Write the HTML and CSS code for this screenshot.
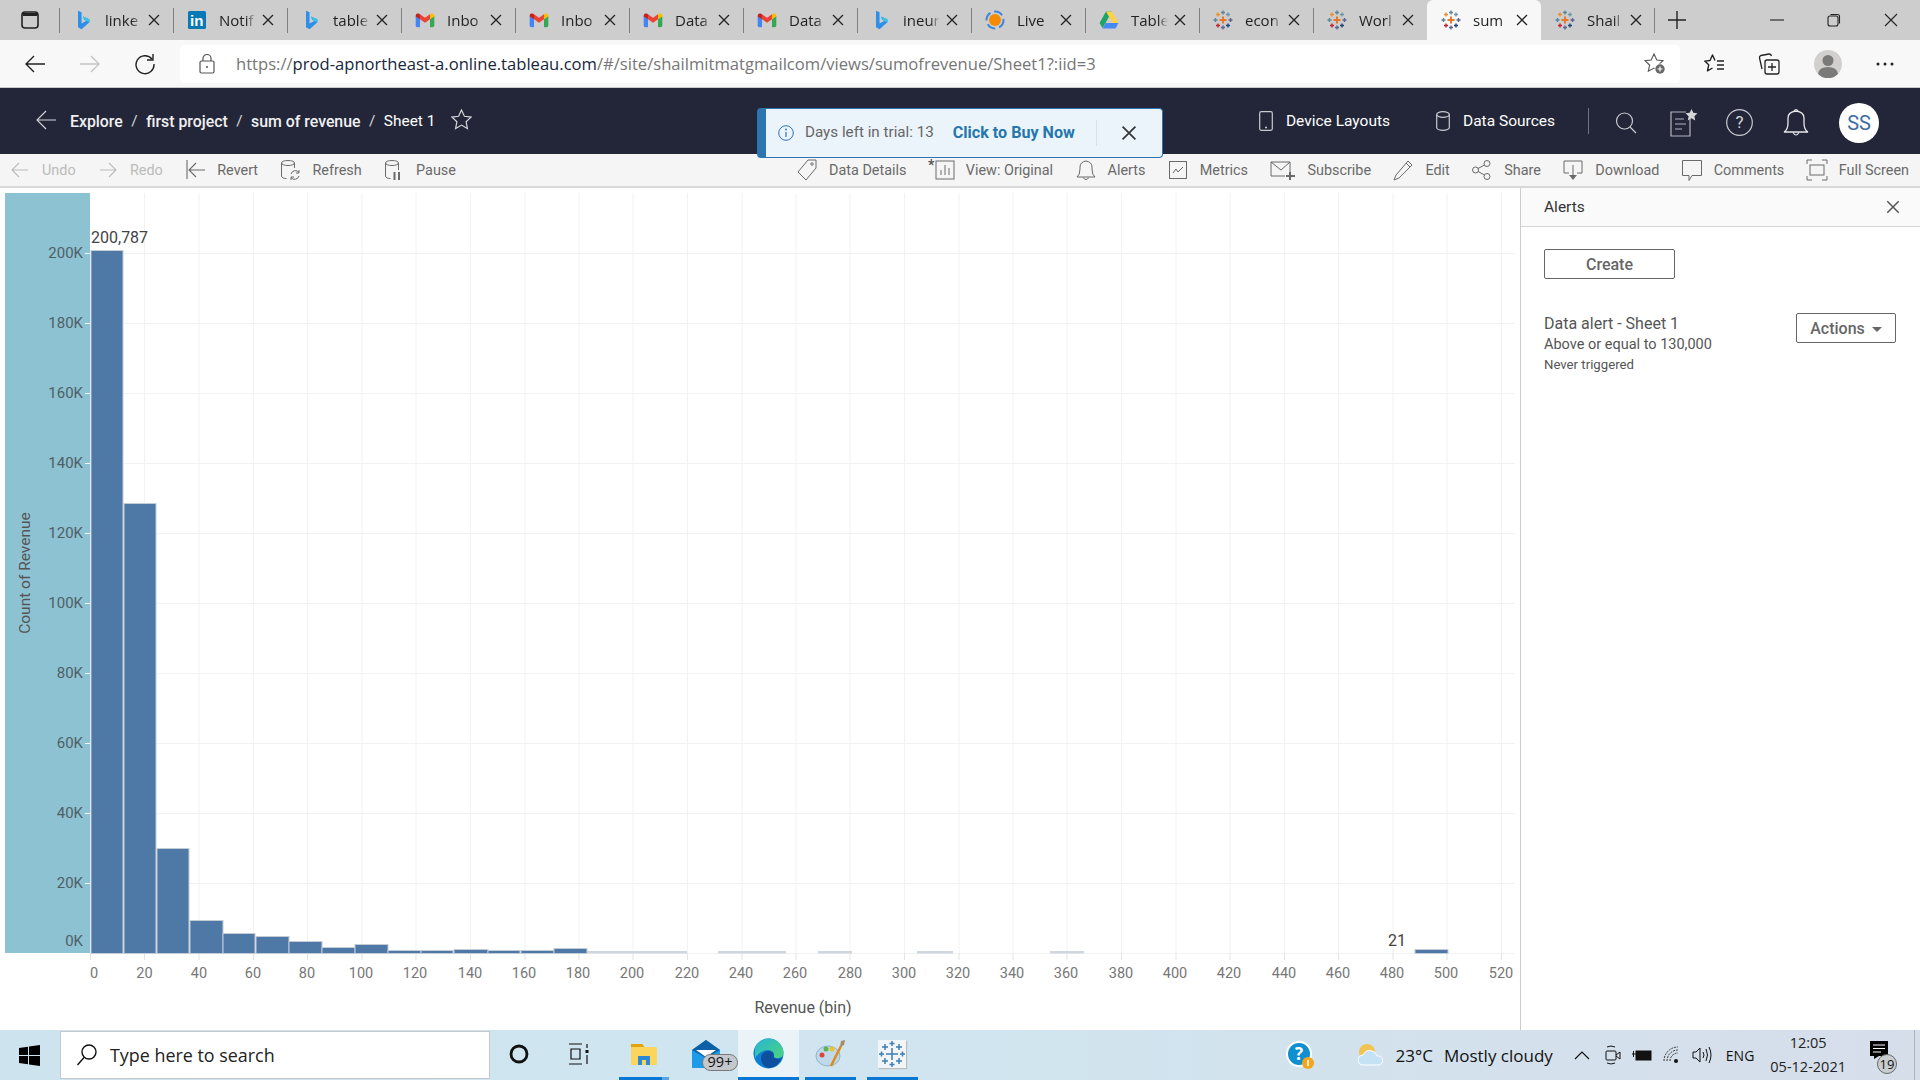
FILE: index.html
```html
<!DOCTYPE html>
<html lang="en">
<head>
<meta charset="utf-8">
<title>sum of revenue</title>
<link rel="stylesheet" href="styles.css">
</head>
<body>
<svg class="defs" width="0" height="0" aria-hidden="true">
  <symbol id="tableau" viewBox="0 0 20 20">
    <g fill="none" stroke-width="1.4">
      <path d="M10 6.500v7M6.500 10h7" stroke="#e8762b" stroke-width="2"/>
      <path d="M10 .5v4M8 2.500h4" stroke="#5b879b"/>
      <path d="M15 2.500v4M13 4.500h4" stroke="#7099a6"/>
      <path d="M5 2.500v4M3 4.500h4" stroke="#eb912b"/>
      <path d="M2.500 8v4M.5 10h4" stroke="#59879b"/>
      <path d="M17.500 8v4M15.500 10h4" stroke="#5b6591"/>
      <path d="M5 13.500v4M3 15.500h4" stroke="#c72035"/>
      <path d="M15 13.500v4M13 15.500h4" stroke="#1f457e"/>
      <path d="M10 15.500v4M8 17.500h4" stroke="#5c6692"/>
    </g>
  </symbol>
  <symbol id="bing" viewBox="0 0 20 28">
    <path d="M3 1l5 2v16l7-4-3.500-1.500L10 9l9 4v4L8 27l-5-3z" fill="#2f8fe8"/>
    <path d="M10 9l9 4v4l-6-2.500z" fill="#38c6e8"/>
  </symbol>
  <symbol id="gmail" viewBox="0 0 28 22">
    <path d="M1 5v14q0 2 2 2h4V10z" fill="#4285f4"/>
    <path d="M27 5v14q0 2-2 2h-4V10z" fill="#34a853"/>
    <path d="M7 10l7 5 7-5V3l-7 5-7-5z" fill="#ea4335"/>
    <path d="M1 5q0-4 4-3l2 1v7L1 6z" fill="#c5221f"/>
    <path d="M27 5q0-4-4-3l-2 1v7l6-4z" fill="#fbbc04"/>
  </symbol>
  <symbol id="x" viewBox="0 0 14 14"><path d="M2 2l10 10M12 2L2 12" fill="none" stroke="currentColor" stroke-width="1.3"/></symbol>
</svg>

<header class="tabstrip">
  <div class="winbtn">
    <svg width="20" height="20" viewBox="0 0 20 20"><rect x="2" y="2" width="16" height="16" rx="3" fill="none" stroke="#222" stroke-width="1.600"/><path d="M3 3h14v3H3z" fill="#222"/></svg>
  </div>
  <div class="tab"><svg class="favicon" viewBox="0 0 20 28"><use href="#bing"/></svg><span class="tab-title">linke</span><svg class="tab-x"><use href="#x"/></svg></div>
  <div class="tab"><svg class="favicon" viewBox="0 0 20 20"><rect x="1" y="1" width="18" height="18" rx="1.500" fill="#0a78b5"/><text x="3" y="16" class="in">in</text></svg><span class="tab-title">Notif</span><svg class="tab-x"><use href="#x"/></svg></div>
  <div class="tab"><svg class="favicon" viewBox="0 0 20 28"><use href="#bing"/></svg><span class="tab-title">table</span><svg class="tab-x"><use href="#x"/></svg></div>
  <div class="tab"><svg class="favicon" viewBox="0 0 28 22"><use href="#gmail"/></svg><span class="tab-title">Inbo</span><svg class="tab-x"><use href="#x"/></svg></div>
  <div class="tab"><svg class="favicon" viewBox="0 0 28 22"><use href="#gmail"/></svg><span class="tab-title">Inbo</span><svg class="tab-x"><use href="#x"/></svg></div>
  <div class="tab"><svg class="favicon" viewBox="0 0 28 22"><use href="#gmail"/></svg><span class="tab-title">Data</span><svg class="tab-x"><use href="#x"/></svg></div>
  <div class="tab"><svg class="favicon" viewBox="0 0 28 22"><use href="#gmail"/></svg><span class="tab-title">Data</span><svg class="tab-x"><use href="#x"/></svg></div>
  <div class="tab"><svg class="favicon" viewBox="0 0 20 28"><use href="#bing"/></svg><span class="tab-title">ineur</span><svg class="tab-x"><use href="#x"/></svg></div>
  <div class="tab"><svg class="favicon" viewBox="0 0 20 20"><circle cx="10" cy="10" r="8.500" fill="none" stroke="#3b87d8" stroke-width="2" stroke-dasharray="9 4"/><circle cx="10" cy="10" r="6" fill="#f58a07"/></svg><span class="tab-title">Live</span><svg class="tab-x"><use href="#x"/></svg></div>
  <div class="tab"><svg class="favicon" viewBox="0 0 20 20"><path d="M7 1.500h6L6.500 13 3.500 18 .5 13z" fill="#1fa463"/><path d="M13 1.500l6.500 11.500h-6L7 1.500z" fill="#ffd04b"/><path d="M6.500 13h13L16.500 18.500h-13z" fill="#4688f4"/></svg><span class="tab-title">Table</span><svg class="tab-x"><use href="#x"/></svg></div>
  <div class="tab"><svg class="favicon"><use href="#tableau"/></svg><span class="tab-title">econ</span><svg class="tab-x"><use href="#x"/></svg></div>
  <div class="tab"><svg class="favicon"><use href="#tableau"/></svg><span class="tab-title">Worl</span><svg class="tab-x"><use href="#x"/></svg></div>
  <div class="tab tab-active"><svg class="favicon"><use href="#tableau"/></svg><span class="tab-title">sum</span><svg class="tab-x"><use href="#x"/></svg></div>
  <div class="tab tab-last"><svg class="favicon"><use href="#tableau"/></svg><span class="tab-title">Shail</span><svg class="tab-x"><use href="#x"/></svg></div>
  <svg class="newtab" width="20" height="20" viewBox="0 0 20 20"><path d="M10 1v18M1 10h18" stroke="#222" stroke-width="1.400"/></svg>
  <div class="wincontrols">
    <svg width="14" height="14" viewBox="0 0 14 14"><path d="M0 7h14" stroke="#222" stroke-width="1.100"/></svg>
    <svg width="14" height="14" viewBox="0 0 14 14"><rect x="1" y="3" width="10" height="10" rx="2" fill="none" stroke="#222" stroke-width="1.100"/><path d="M3.500 1.500h7q2 0 2 2v7" fill="none" stroke="#222" stroke-width="1.100"/></svg>
    <svg width="14" height="14" viewBox="0 0 14 14"><path d="M1 1l12 12M13 1L1 13" stroke="#222" stroke-width="1.100"/></svg>
  </div>
</header>

<div class="addressbar">
  <svg class="nav-ic" width="22" height="22" viewBox="0 0 22 22"><path d="M21 11H2M10 3l-8 8 8 8" fill="none" stroke="#222" stroke-width="1.400"/></svg>
  <svg class="nav-ic" width="22" height="22" viewBox="0 0 22 22"><path d="M1 11h19M12 3l8 8-8 8" fill="none" stroke="#c4c4c4" stroke-width="1.400"/></svg>
  <svg class="nav-ic" width="22" height="22" viewBox="0 0 22 22"><path d="M18 6a9 9 0 1 0 2 5" fill="none" stroke="#222" stroke-width="1.400"/><path d="M19 1v6h-6" fill="none" stroke="#222" stroke-width="1.400"/></svg>
  <div class="omnibox">
    <svg class="lock" width="16" height="20" viewBox="0 0 16 20"><rect x="1" y="7" width="14" height="12" rx="1.500" fill="none" stroke="#555" stroke-width="1.200"/><path d="M4 7V4.500a4 4 0 0 1 8 0V7" fill="none" stroke="#555" stroke-width="1.200"/><circle cx="8" cy="13" r="1" fill="#555"/></svg>
    <span class="url"><span class="url-dim">https://</span><span class="url-host">prod-apnortheast-a.online.tableau.com</span><span class="url-dim">/#/site/shailmitmatgmailcom/views/sumofrevenue/Sheet1?:iid=3</span></span>
    <svg class="addfav" width="22" height="22" viewBox="0 0 22 22"><path d="M10 1l2.800 6 6.200.7-4.600 4.300 1.300 6.300-5.700-3.200-5.700 3.200 1.300-6.300L1 7.700 7.200 7z" fill="none" stroke="#555" stroke-width="1.100"/><circle cx="16" cy="16" r="5.500" fill="#fff"/><circle cx="16" cy="16" r="4.700" fill="#666"/><path d="M16 13.500v5M13.500 16h5" stroke="#fff" stroke-width="1.200"/></svg>
  </div>
  <div class="browser-tools">
    <svg width="22" height="22" viewBox="0 0 22 22"><path d="M11 7.500L8.500 2 6 7.500l-5.300.6 4 3.700-1.200 6L8.500 15" fill="none" stroke="#222" stroke-width="1.400" stroke-linejoin="round"/><path d="M13 8h7M13 12h7M13 16h7" stroke="#222" stroke-width="1.400"/></svg>
    <svg class="collections" width="22" height="22" viewBox="0 0 22 22"><rect x="7" y="7" width="14" height="14" rx="2" fill="none" stroke="#222" stroke-width="1.300"/><path d="M14 10v8M10 14h8" stroke="#222" stroke-width="1.300"/><path d="M4 16L1.500 5Q1.200 3 3 2.500L11 1q2-.2 2.500 2" fill="none" stroke="#222" stroke-width="1.300"/></svg>
    <div class="profile"><svg width="28" height="28" viewBox="0 0 28 28"><circle cx="14" cy="14" r="14" fill="#d1d0ce"/><circle cx="14" cy="10.500" r="5.500" fill="#7a7a78"/><path d="M4 24q1-7 10-7t10 7a14 14 0 0 1-20 0z" fill="#7a7a78"/></svg></div>
    <svg width="22" height="22" viewBox="0 0 22 22"><circle cx="4" cy="11" r="1.500" fill="#222"/><circle cx="11" cy="11" r="1.500" fill="#222"/><circle cx="18" cy="11" r="1.500" fill="#222"/></svg>
  </div>
</div>

<nav class="topnav">
  <svg class="nav-back" width="20" height="20" viewBox="0 0 20 20"><path d="M20 10H1M10 1l-9 9 9 9" fill="none" stroke="#d5d6da" stroke-width="1.100"/></svg>
  <div class="crumbs">
    <b>Explore</b><i>/</i><b>first project</b><i>/</i><b>sum of revenue</b><i>/</i><span>Sheet 1</span>
  </div>
  <svg class="nav-star" width="21" height="21" viewBox="0 0 21 21"><path d="M10.500 1l2.900 6.300 6.600.8-4.900 4.600 1.300 6.800-5.900-3.400-5.900 3.400 1.300-6.800L1 8.100l6.600-.8z" fill="none" stroke="#d5d6da" stroke-width="1.200"/></svg>
  <div class="nav-right">
    <div class="nav-link"><svg width="14" height="20" viewBox="0 0 14 20"><rect x=".7" y=".7" width="12.600" height="18.600" rx="1.500" fill="none" stroke="#c8cad0" stroke-width="1.200"/><path d="M6 16.500h2" stroke="#c8cad0" stroke-width="1.400"/></svg><span>Device Layouts</span></div>
    <div class="nav-link"><svg width="14" height="20" viewBox="0 0 14 20"><ellipse cx="7" cy="3.500" rx="6.300" ry="2.800" fill="none" stroke="#c8cad0" stroke-width="1.200"/><path d="M.7 3.500v13c0 1.500 2.800 2.800 6.300 2.800s6.300-1.300 6.300-2.800v-13" fill="none" stroke="#c8cad0" stroke-width="1.200"/></svg><span>Data Sources</span></div>
    <div class="nav-div"></div>
    <svg class="nav-tool nav-search" width="22" height="24" viewBox="0 0 22 24"><circle cx="9.500" cy="10" r="8" fill="none" stroke="#c8cad0" stroke-width="1.200"/><path d="M15 16l6 6" stroke="#c8cad0" stroke-width="1.300"/></svg>
    <svg class="nav-tool nav-notes" width="28" height="28" viewBox="0 0 28 28"><path d="M16 3H1v24h19V10" fill="none" stroke="#b4b6bc" stroke-width="1.200"/><path d="M5 10h9M5 15h11M5 20h7" stroke="#b4b6bc" stroke-width="1.200"/><path d="M21.500 0l1.800 3.800 4.200.5-3.100 2.900.8 4.200-3.700-2.100-3.700 2.100.8-4.200-3.100-2.900 4.200-.5z" fill="#d5d6da"/></svg>
    <svg class="nav-tool" width="27" height="27" viewBox="0 0 27 27"><circle cx="13.500" cy="13.500" r="12.800" fill="none" stroke="#c8cad0" stroke-width="1.200"/><text x="13.500" y="19" class="qmark">?</text></svg>
    <svg class="nav-tool" width="26" height="29" viewBox="0 0 26 29"><path d="M1 24q4-2 4-9V10q0-6 8-7 8 1 8 7v5q0 7 4 9z" fill="none" stroke="#e8e8ea" stroke-width="1.300"/><path d="M10 24.500q3 5 6 0M11 3q2-3 4 0" fill="none" stroke="#e8e8ea" stroke-width="1.200"/></svg>
    <div class="avatar">SS</div>
  </div>
</nav>

<div class="trial">
  <svg width="16" height="16" viewBox="0 0 16 16"><circle cx="8" cy="8" r="7.300" fill="none" stroke="#2e75b0" stroke-width="1"/><path d="M8 7v5" stroke="#2e75b0" stroke-width="1.200"/><circle cx="8" cy="4.500" r=".9" fill="#2e75b0"/></svg>
  <span class="trial-days">Days left in trial: 13</span>
  <span class="trial-buy">Click to Buy Now</span>
  <div class="trial-div"></div>
  <svg class="trial-x" width="18" height="18"><use href="#x"/></svg>
</div>

<div class="toolbar">
  <div class="tool tool-off"><svg class="ti" viewBox="0 0 22 22"><path d="M19 11H4M10 4l-7 7 7 7" fill="none" stroke="currentColor" stroke-width="1.100"/></svg><span>Undo</span></div>
  <div class="tool tool-off"><svg class="ti" viewBox="0 0 22 22"><path d="M3 11h15M12 4l7 7-7 7" fill="none" stroke="currentColor" stroke-width="1.100"/></svg><span>Redo</span></div>
  <div class="tool"><svg class="ti" viewBox="0 0 22 22"><path d="M3 1v19M21 11H5M12 4l-7 7 7 7" fill="none" stroke="currentColor" stroke-width="1.100"/></svg><span>Revert</span></div>
  <div class="tool"><svg class="ti" viewBox="0 0 22 22"><ellipse cx="9" cy="4" rx="6.500" ry="2.500" fill="none" stroke="currentColor"/><path d="M2.500 4v13c0 1.500 2 2.500 5 2.500M15.500 4v5" fill="none" stroke="currentColor"/><path d="M12 15a4.500 4.500 0 0 1 8-1.500M20 17a4.500 4.500 0 0 1-8 1.500M20 11v3h-3M12 21v-3h3" fill="none" stroke="currentColor"/></svg><span>Refresh</span></div>
  <div class="tool"><svg class="ti" viewBox="0 0 22 22"><ellipse cx="9" cy="4" rx="6.500" ry="2.500" fill="none" stroke="currentColor"/><path d="M2.500 4v13c0 1.500 2 2.500 5 2.500M15.500 4v7" fill="none" stroke="currentColor"/><path d="M11.500 13v8M16 13v8" stroke="currentColor" stroke-width="2"/></svg><span>Pause</span></div>
  <div class="tool tool-push"><svg class="ti" viewBox="0 0 22 22"><path d="M12 1h8v8L10 21 2 13z" fill="none" stroke="currentColor"/><circle cx="16" cy="5" r="1.200" fill="none" stroke="currentColor"/></svg><span>Data Details</span></div>
  <div class="tool"><svg class="ti ti-wide" viewBox="0 0 27 22"><text x="0" y="11" class="asterisk">*</text><rect x="8" y="2" width="18" height="18" fill="none" stroke="currentColor"/><path d="M13 16v-5M17 16V6M21 16V9" stroke="currentColor"/></svg><span>View: Original</span></div>
  <div class="tool"><svg class="ti" viewBox="0 0 22 22"><path d="M2 18q3-2 3-8V8q0-5 6-6 6 1 6 6v2q0 6 3 8zM8 18.500q3 4 6 0" fill="none" stroke="currentColor"/></svg><span>Alerts</span></div>
  <div class="tool"><svg class="ti" viewBox="0 0 22 22"><rect x="2.500" y="2.500" width="17" height="17" fill="none" stroke="currentColor"/><path d="M6 14l3-4 2 3 5-5" fill="none" stroke="currentColor"/></svg><span>Metrics</span></div>
  <div class="tool"><svg class="ti ti-wide" viewBox="0 0 27 22"><path d="M21 13V3H2v14h14M2 3l10 8 9-8" fill="none" stroke="currentColor"/><path d="M21 13v8M17 17h9" stroke="currentColor" stroke-width="2"/></svg><span>Subscribe</span></div>
  <div class="tool"><svg class="ti" viewBox="0 0 22 22"><path d="M16 2l4 4L7 19l-5 2 2-5zM14 4l4 4" fill="none" stroke="currentColor"/></svg><span>Edit</span></div>
  <div class="tool"><svg class="ti" viewBox="0 0 22 22"><circle cx="4.500" cy="11" r="3" fill="none" stroke="currentColor"/><circle cx="16" cy="4.500" r="3" fill="none" stroke="currentColor"/><circle cx="16" cy="17.500" r="3" fill="none" stroke="currentColor"/><path d="M7 9.500l6.500-3.500M7 12.500l6.500 3.500" stroke="currentColor"/></svg><span>Share</span></div>
  <div class="tool"><svg class="ti" viewBox="0 0 22 22"><path d="M7 14H2V2h18v12h-5" fill="none" stroke="currentColor"/><path d="M11 6v11" stroke="currentColor"/><path d="M7 16h8l-4 5z" fill="currentColor"/></svg><span>Download</span></div>
  <div class="tool"><svg class="ti" viewBox="0 0 22 22"><path d="M1.500 1.500h19v15H11l-3 5v-5H1.500z" fill="none" stroke="currentColor"/></svg><span>Comments</span></div>
  <div class="tool"><svg class="ti" viewBox="0 0 22 22"><path d="M1 5V1h5M16 1h5v4M1 17v4h5M16 21h5v-4" fill="none" stroke="currentColor"/><rect x="4" y="6" width="14" height="10" fill="none" stroke="currentColor"/></svg><span>Full Screen</span></div>
</div>

<main class="workspace">
  <svg class="chart" viewBox="0 188 1520 842" width="1520" height="842" role="img" aria-label="Histogram of revenue">
    <rect x="5" y="193" width="85" height="760" fill="#8dc2d3"/>
    <path class="grid" d="M144.500 193V953M199 193V953M253.500 193V953M307.500 193V953M362 193V953M416 193V953M470.500 193V953M525 193V953M579 193V953M633 193V953M687.500 193V953M742 193V953M796 193V953M850 193V953M904.500 193V953M959 193V953M1013 193V953M1067 193V953M1121.500 193V953M1176 193V953M1230 193V953M1284.500 193V953M1338.500 193V953M1393 193V953M1447 193V953M1501.500 193V953"/>
    <path class="grid" d="M90 253.500H1515M90 323.500H1515M90 393.500H1515M90 463.500H1515M90 533.500H1515M90 603.500H1515M90 673.500H1515M90 743.500H1515M90 813.500H1515M90 883.500H1515M90 953.500H1515"/>
    <path class="ytick" d="M85 253.500h5M85 323.500h5M85 393.500h5M85 463.500h5M85 533.500h5M85 603.500h5M85 673.500h5M85 743.500h5M85 813.500h5M85 883.500h5"/>
    <path class="xtick" d="M90.500 953v7M144.500 953v7M199 953v7M253.500 953v7M307.500 953v7M362 953v7M416 953v7M470.500 953v7M525 953v7M579 953v7M633 953v7M687.500 953v7M742 953v7M796 953v7M850 953v7M904.500 953v7M959 953v7M1013 953v7M1067 953v7M1121.500 953v7M1176 953v7M1230 953v7M1284.500 953v7M1338.500 953v7M1393 953v7M1447 953v7M1501.500 953v7"/>
    <g class="bars">
      <rect x="91" y="250.500" width="32" height="703"/>
      <rect x="124" y="503.500" width="32" height="450"/>
      <rect x="157" y="848.500" width="32" height="105"/>
      <rect x="190" y="920.500" width="33" height="33"/>
      <rect x="223" y="933.500" width="32" height="20"/>
      <rect x="256" y="936.500" width="33" height="17"/>
      <rect x="289" y="941.500" width="33" height="12"/>
      <rect x="322" y="947.500" width="33" height="6"/>
      <rect x="355" y="944.500" width="33" height="9"/>
      <rect x="388" y="950.500" width="33" height="3"/>
      <rect x="421" y="950.500" width="32" height="3"/>
      <rect x="454" y="949.500" width="34" height="4"/>
      <rect x="488" y="950.500" width="32" height="3"/>
      <rect x="521" y="950.500" width="33" height="3"/>
      <rect x="554" y="948.500" width="33" height="5"/>
      <rect x="1415" y="949.500" width="33" height="4"/>
    </g>
    <g class="bars-faint">
      <rect x="587" y="951" width="100" height="2.500"/>
      <rect x="718" y="951" width="68" height="2.500"/>
      <rect x="818" y="951" width="34" height="2.500"/>
      <rect x="917" y="951" width="36" height="2.500"/>
      <rect x="1050" y="951" width="34" height="2.500"/>
    </g>
    <g class="ylabels">
      <text x="83" y="258">200K</text><text x="83" y="328">180K</text><text x="83" y="398">160K</text><text x="83" y="468">140K</text><text x="83" y="538">120K</text><text x="83" y="608">100K</text><text x="83" y="678">80K</text><text x="83" y="748">60K</text><text x="83" y="818">40K</text><text x="83" y="888">20K</text><text x="83" y="946">0K</text>
    </g>
    <g class="xlabels">
      <text x="94" y="978">0</text><text x="144.500" y="978">20</text><text x="199" y="978">40</text><text x="253" y="978">60</text><text x="307" y="978">80</text><text x="361" y="978">100</text><text x="415" y="978">120</text><text x="470" y="978">140</text><text x="524" y="978">160</text><text x="578" y="978">180</text><text x="632" y="978">200</text><text x="687" y="978">220</text><text x="741" y="978">240</text><text x="795" y="978">260</text><text x="850" y="978">280</text><text x="904" y="978">300</text><text x="958" y="978">320</text><text x="1012" y="978">340</text><text x="1066" y="978">360</text><text x="1121" y="978">380</text><text x="1175" y="978">400</text><text x="1229" y="978">420</text><text x="1284" y="978">440</text><text x="1338" y="978">460</text><text x="1392" y="978">480</text><text x="1446" y="978">500</text><text x="1501" y="978">520</text>
    </g>
    <text class="mark-label" x="91" y="242.500">200,787</text>
    <text class="mark-label mark-end" x="1406" y="945.500">21</text>
    <text class="axis-title" x="803" y="1012.500">Revenue (bin)</text>
    <text class="axis-title axis-y" transform="translate(29.500 573) rotate(-90)">Count of Revenue</text>
  </svg>
  <aside class="panel">
    <div class="panel-head"><span>Alerts</span><svg width="16" height="16"><use href="#x"/></svg></div>
    <div class="panel-body">
      <button class="btn btn-create">Create</button>
      <div class="alert-row">
        <div class="alert-info">
          <div class="alert-name">Data alert - Sheet 1</div>
          <div class="alert-cond">Above or equal to 130,000</div>
          <div class="alert-state">Never triggered</div>
        </div>
        <button class="btn btn-actions">Actions <i class="caret"></i></button>
      </div>
    </div>
  </aside>
</main>

<footer class="taskbar">
  <div class="start"><svg width="21" height="21" viewBox="0 0 21 21"><path d="M0 3l9-1.300V10H0zM10 1.500L21 0v10H10zM0 11h9v8.300L0 18zM10 11h11v10l-11-1.500z" fill="#000"/></svg></div>
  <div class="search">
    <svg width="22" height="24" viewBox="0 0 22 24"><circle cx="13" cy="9" r="7" fill="none" stroke="#111" stroke-width="1.400"/><path d="M8 14.500L1.500 22" stroke="#111" stroke-width="1.400"/></svg>
    <span>Type here to search</span>
  </div>
  <div class="slot slot-cortana"><svg width="20" height="20" viewBox="0 0 20 20"><circle cx="10" cy="10" r="8" fill="none" stroke="#111" stroke-width="2.800"/></svg></div>
  <div class="slot"><svg width="22" height="22" viewBox="0 0 22 22"><path d="M1 1h13M1 21h13M3 6h9v10H3zM19 1v4M19 12v9" fill="none" stroke="#111" stroke-width="1.200"/><rect x="17.500" y="7" width="3" height="3" fill="#111"/></svg></div>
  <div class="slot slot-open slot-files"><svg width="28" height="24" viewBox="0 0 28 24"><path d="M1 2h11l2 2v4H1z" fill="#e0a40e"/><rect x="1" y="5" width="26" height="18" rx="1" fill="#fcd55c"/><path d="M8 23v-9h12v9h-4v-5h-4v5z" fill="#2d8ad8"/></svg></div>
  <div class="slot mailslot"><svg width="30" height="30" viewBox="0 0 30 30"><path d="M1 11L15 1l14 10v18H1z" fill="#1d9ae8"/><path d="M1 11L15 1l14 10-14 8z" fill="#0d5fa8"/><path d="M5 11h20l-10 7z" fill="#fff"/></svg><span class="mailbadge">99+</span></div>
  <div class="slot slot-active"><svg width="31" height="31" viewBox="0 0 31 31"><defs><linearGradient id="edgeg" x1="0" y1="0" x2="1" y2="1"><stop offset="0" stop-color="#27b6d8"/><stop offset="1" stop-color="#4cd37a"/></linearGradient></defs><circle cx="15.500" cy="15.500" r="15" fill="#0c7fd4"/><path d="M2 10Q6 1 15.500 .5 28 1 30.500 14q0 6-6 6-5 0-4-3 1-4-5-5Q7 12 2 20z" fill="url(#edgeg)"/><path d="M8 20q1-7 8-7 5 1 5 4-1 4 4 4 3 0 4-2-3 10-13 11Q8 28 8 20z" fill="#0f4f9e"/></svg></div>
  <div class="slot slot-open"><svg width="31" height="30" viewBox="0 0 31 30"><ellipse cx="13" cy="17" rx="12" ry="10" fill="#bfd9ea" stroke="#8fb3cc"/><circle cx="7" cy="16" r="2.500" fill="#d8463c"/><circle cx="11" cy="10" r="2.500" fill="#5fb24d"/><circle cx="17" cy="10" r="2.500" fill="#eec22e"/><path d="M16 27L26 7" stroke="#e08a1c" stroke-width="2.500"/><path d="M25 8l1-6 4-1-1 5z" fill="#a88b62"/></svg></div>
  <div class="slot slot-open"><div class="tableau-tile"><svg width="26" height="26" viewBox="0 0 26 26"><g stroke="#3b7fb5" stroke-width="1.500" fill="none"><path d="M13 7v12M7 13h12M13 0v5M10.500 2.500h5M13 21v5M10.500 23.500h5M0 13h5M2.500 10.500v5M21 13h5M23.500 10.500v5M6 3v6M3 6h6M20 3v6M17 6h6M6 17v6M3 20h6M20 17v6M17 20h6"/></g></svg></div></div>
  <div class="tray">
    <svg class="t-help" width="30" height="30" viewBox="0 0 30 30"><circle cx="14" cy="14" r="13" fill="#fff"/><circle cx="14" cy="14" r="11" fill="#0f8fd0"/><text x="14" y="20" class="help-q">?</text><circle cx="23" cy="23" r="6" fill="#f3a51b"/><path d="M23 20v6" stroke="#fff" stroke-width="1.600"/></svg>
    <svg class="t-cloud" width="26" height="24" viewBox="0 0 26 24"><circle cx="9" cy="9" r="8" fill="#f0c353"/><path d="M5 22a5 5 0 0 1 0-10q3-6 9-4 4 1 5 5a4.500 4.500 0 0 1 2 9z" fill="#c5e2f5" stroke="#fff"/></svg>
    <span class="t-temp">23°C</span>
    <span class="t-weather">Mostly cloudy</span>
    <svg class="t-ic t-chev" width="16" height="10" viewBox="0 0 16 10"><path d="M1 9l7-7 7 7" fill="none" stroke="#111" stroke-width="1.200"/></svg>
    <svg class="t-ic" width="16" height="20" viewBox="0 0 16 20"><path d="M2 2q4-2 8 0M2 18q4 2 8 0" fill="none" stroke="#111"/><rect x="1" y="6" width="10" height="9" rx="1" fill="none" stroke="#111"/><path d="M11 10l4-3v7l-4-3" fill="none" stroke="#111"/></svg>
    <svg class="t-ic" width="20" height="14" viewBox="0 0 20 14"><rect x="4" y="3" width="15" height="9" fill="#111" stroke="#111"/><path d="M0 6h4M1.500 3v6" stroke="#111"/></svg>
    <svg class="t-ic" width="18" height="18" viewBox="0 0 18 18"><path d="M1 15a14 14 0 0 1 14-14M4 15a11 11 0 0 1 11-11M7 15a8 8 0 0 1 8-8" fill="none" stroke="#333" stroke-dasharray="2 1"/><circle cx="13" cy="15" r="2" fill="#111"/></svg>
    <svg class="t-ic t-vol" width="20" height="18" viewBox="0 0 20 18"><path d="M1 6h3l4-4v14l-4-4H1zM11 6q2 3 0 6M14 3q3 6 0 12M17 1q4 8 0 16" fill="none" stroke="#111"/></svg>
    <span class="t-lang">ENG</span>
    <div class="t-clock"><span>12:05</span><span>05-12-2021</span></div>
    <div class="t-notify"><svg width="18" height="18" viewBox="0 0 18 18"><rect width="18" height="15" fill="#000"/><path d="M3 4h12M3 7.500h12M3 11h8" stroke="#fff"/><path d="M4 15h5l-5 3z" fill="#000"/></svg><span class="t-count">19</span></div>
    <div class="t-desk"></div>
  </div>
</footer>
</body>
</html>
```
FILE: styles.css
```css
* { box-sizing: border-box; }
html, body { margin: 0; padding: 0; }
body {
  width: 1920px; height: 1080px; overflow: hidden;
  display: flex; flex-direction: column; position: relative;
  font-family: Roboto, "Liberation Sans", sans-serif;
  background: #fff;
}
.defs { position: absolute; }

/* browser tab strip */
.tabstrip { height: 40px; background: #cdcdcd; display: flex; align-items: stretch; font-family: "Open Sans", sans-serif; font-size: 15px; color: #222; }
.winbtn { width: 59px; display: flex; align-items: center; justify-content: center; }
.winbtn svg { margin-left: 1px; }
.tab { width: 114px; display: flex; align-items: center; padding-left: 14px; position: relative; }
.tab::before { content: ""; position: absolute; left: 0; top: 8px; height: 25px; width: 1px; background: #7f7f7f; }
.tab-last::after { content: ""; position: absolute; right: 0; top: 8px; height: 25px; width: 1px; background: #7f7f7f; }
.favicon { width: 20px; height: 20px; flex: none; }
.tab-title { width: 40px; margin-left: 12px; white-space: nowrap; overflow: hidden; -webkit-mask-image: linear-gradient(90deg, #000 68%, transparent 92%); mask-image: linear-gradient(90deg, #000 68%, transparent 92%); }
.tab-x { width: 14px; height: 14px; margin-left: 2px; color: #222; flex: none; }
.tab-active { background: #f7f7f7; border-radius: 6px 6px 0 0; }
.tab-active::before, .tab-active + .tab::before { display: none; }
.in { font: 700 15px "Liberation Sans", sans-serif; fill: #fff; }
.newtab { margin: 10px 0 0 11.500px; }
.wincontrols { margin-left: auto; display: flex; align-items: center; gap: 43px; padding-right: 22px; }

/* address bar */
.addressbar { height: 48px; background: #f8f8f8; border-bottom: 1px solid #c9c9c9; display: flex; align-items: center; padding-left: 24px; }
.nav-ic { margin-right: 33px; }
.nav-ic:nth-of-type(3) { margin-right: 24px; }
.omnibox { width: 1500px; height: 38px; margin-top: 1px; background: #fff; border-radius: 4px; display: flex; align-items: center; padding-left: 19px; }
.url { margin-left: 21px; margin-top: -2px; font-family: "Open Sans", sans-serif; font-size: 16.600px; white-space: nowrap; }
.url-dim { color: #767676; }
.url-host { color: #17263d; }
.addfav { margin-left: auto; margin-right: 14px; }
.browser-tools { display: flex; align-items: center; gap: 32px; padding-left: 24px; }
.collections { margin-right: 2px; }
.profile { width: 28px; height: 28px; }
.profile svg { display: block; }

/* tableau top nav */
.topnav { height: 66px; background: #232638; display: flex; align-items: center; padding-left: 36px; color: #fff; font-size: 15.500px; }
.nav-back { margin-top: -2px; }
.crumbs { display: flex; align-items: center; gap: 8.500px; margin-left: 14px; white-space: nowrap; font-size: 15.400px; }
.crumbs b { font-weight: 500; font-size: 15.850px; color: #f0f0f2; }
.crumbs i { font-style: normal; color: #d5d6da; }
.nav-star { margin-left: 16px; margin-top: -3px; }
.nav-right { margin-left: auto; display: flex; align-items: center; padding-right: 41px; }
.nav-link { display: flex; align-items: center; gap: 13px; margin-right: 46px; white-space: nowrap; }
.nav-link + .nav-link { margin-right: 33px; }
.nav-div { width: 1px; height: 26px; background: #70727e; margin-right: 26px; }
.nav-tool { margin-right: 30px; margin-top: 3px; }
.nav-search { margin-right: 33px; }
.nav-notes { margin-right: 28px; }
.qmark { font: 400 17px Roboto, sans-serif; fill: #d5d6da; text-anchor: middle; }
.avatar { width: 40px; height: 40px; margin-top: 3px; border-radius: 50%; background: #fff; color: #3e6d9f; display: flex; align-items: center; justify-content: center; font-size: 20px; }

/* trial banner (overlay) */
.trial {
  position: absolute; left: 757px; top: 108px; width: 406px; height: 50px; z-index: 2;
  display: flex; align-items: center; padding-left: 12px;
  background: #ebf3fb; border: 1px solid #2e75b0; border-left-width: 9px; border-radius: 4px;
  font-size: 15.200px; white-space: nowrap;
}
.trial-days { margin-left: 11px; margin-top: -2px; color: #666; }
.trial-buy { margin-left: 19px; margin-top: -2px; color: #2477ad; font-weight: 700; font-size: 16.100px; }
.trial-div { width: 1px; height: 26px; margin-left: 21px; background: #d5e2ee; }
.trial-x { margin-left: 23px; color: #333; }

/* toolbar */
.toolbar { height: 34px; background: #f5f5f5; border-bottom: 2px solid #d8d8d8; display: flex; align-items: center; padding: 0 11px 0 9px; gap: 21.400px; font-size: 14.400px; color: #6a6a6a; white-space: nowrap; }
.tool { display: flex; align-items: center; gap: 11px; }
.tool-off { color: #bbbbbb; }
.tool-push { margin-left: auto; }
.ti { width: 22px; height: 22px; flex: none; }
.ti-wide { width: 27px; }
.asterisk { font: 700 14px Roboto, sans-serif; fill: #555; }

/* workspace */
.workspace { height: 842px; display: flex; }
.chart { display: block; flex: none; width: 1520px; height: 842px; }
.grid { stroke: #f2f2f2; stroke-width: 1; fill: none; }
.ytick { stroke: #fff; stroke-width: 1; }
.xtick { stroke: #e3e3e3; stroke-width: 1; }
.bars rect { fill: #4e79a7; stroke: #c4ccd6; stroke-width: 1; }
.bars-faint rect { fill: #d0d6dd; }
.ylabels text { font-size: 15px; fill: #4f5f66; text-anchor: end; }
.xlabels text { font-size: 14.500px; fill: #777; text-anchor: middle; }
.mark-label { font-size: 16px; fill: #444; }
.mark-end { text-anchor: end; }
.axis-title { font-size: 16px; fill: #555; text-anchor: middle; }
.axis-y { font-size: 15.500px; }

/* alerts panel */
.panel { width: 400px; border-left: 1px solid #ccc; font-size: 14px; color: #555; }
.panel-head { height: 39px; background: #fafafa; border-bottom: 1px solid #d4d4d4; display: flex; align-items: center; justify-content: space-between; padding: 0 19px 0 23px; font-size: 15.500px; color: #333; }
.panel-head svg { color: #555; }
.panel-body { padding: 22px 24px 0 23px; }
.btn { display: block; height: 30px; padding: 0; background: #fff; border: 1px solid #666; border-radius: 2px; color: #666; font: 500 16px Roboto, sans-serif; }
.btn-create { width: 131px; }
.btn-actions { width: 100px; margin-top: 1px; }
.caret { display: inline-block; width: 0; height: 0; margin-left: 3px; vertical-align: 2px; border: 5px solid transparent; border-bottom: 0; border-top-color: #666; }
.alert-row { display: flex; justify-content: space-between; align-items: flex-start; margin-top: 30px; padding-top: 3px; }
.alert-name { font-size: 16px; line-height: 23px; }
.alert-cond { font-size: 14.500px; line-height: 20px; }
.alert-state { font-size: 13.200px; line-height: 20px; }

/* taskbar */
.taskbar { height: 50px; background: linear-gradient(90deg, #cde4ee 0%, #d0e5ef 50%, #d6deea 100%); display: flex; align-items: stretch; font-family: "Open Sans", sans-serif; color: #111; }
.start { width: 60px; display: flex; align-items: center; justify-content: center; padding-right: 2px; }
.search { width: 430px; margin: 1px 0; background: #fff; border: 1px solid #c4c8cc; display: flex; align-items: center; gap: 12px; padding-left: 15px; font-size: 17.900px; color: #222; }
.slot { width: 61px; display: flex; align-items: center; justify-content: center; border-bottom: 3px solid transparent; position: relative; flex: none; }
.slot-cortana { width: 58px; }
.slot-open { border-bottom-color: #0878d4; margin: 0 5.500px; width: 51px; }
.slot-files { margin-left: 10px; width: 50px; margin-right: 6px; border-image: linear-gradient(90deg, #0878d4 84%, #5aa5e4 84%) 1; }
.mailslot { width: 62px; margin-right: 1px; }
.slot-active { background: #e9f3f8; border-bottom-color: #0878d4; }
.mailbadge { position: absolute; left: 27px; top: 24px; width: 36px; height: 17px; border: 1px solid #777; border-radius: 9px; background: #c4c8cc; font-size: 14.500px; line-height: 14px; text-align: center; color: #111; }
.tableau-tile { width: 28px; height: 28px; background: #f2f5f7; box-shadow: 1px 1px 1px #bbb; display: flex; align-items: center; justify-content: center; }
.tray { margin-left: auto; display: flex; align-items: center; white-space: nowrap; padding-right: 5px; font-size: 17px; }
.help-q { font: 700 17px "Open Sans", sans-serif; fill: #fff; text-anchor: middle; }
.t-help { margin-right: 43px; }
.t-cloud { margin-right: 11px; }
.t-temp { margin-right: 11px; }
.t-weather { margin-right: 21px; }
.t-ic { margin-right: 11px; }
.t-chev { margin-right: 15px; }
.t-vol { margin-right: 14px; }
.t-lang { font-size: 14px; margin-right: 16px; }
.t-clock { display: flex; flex-direction: column; align-items: center; font-size: 14.500px; line-height: 24px; margin-right: 24px; color: #222; }
.t-notify { position: relative; width: 26px; height: 30px; }
.t-notify svg { display: block; margin-top: 1px; }
.t-count { position: absolute; left: 7px; top: 14px; width: 20px; height: 20px; border: 1px solid #666; border-radius: 50%; background: #c9cdd0; font-size: 13px; line-height: 18px; text-align: center; }
.t-desk { width: 1px; height: 100%; margin-left: 18px; background: #a9b4bf; }
```
